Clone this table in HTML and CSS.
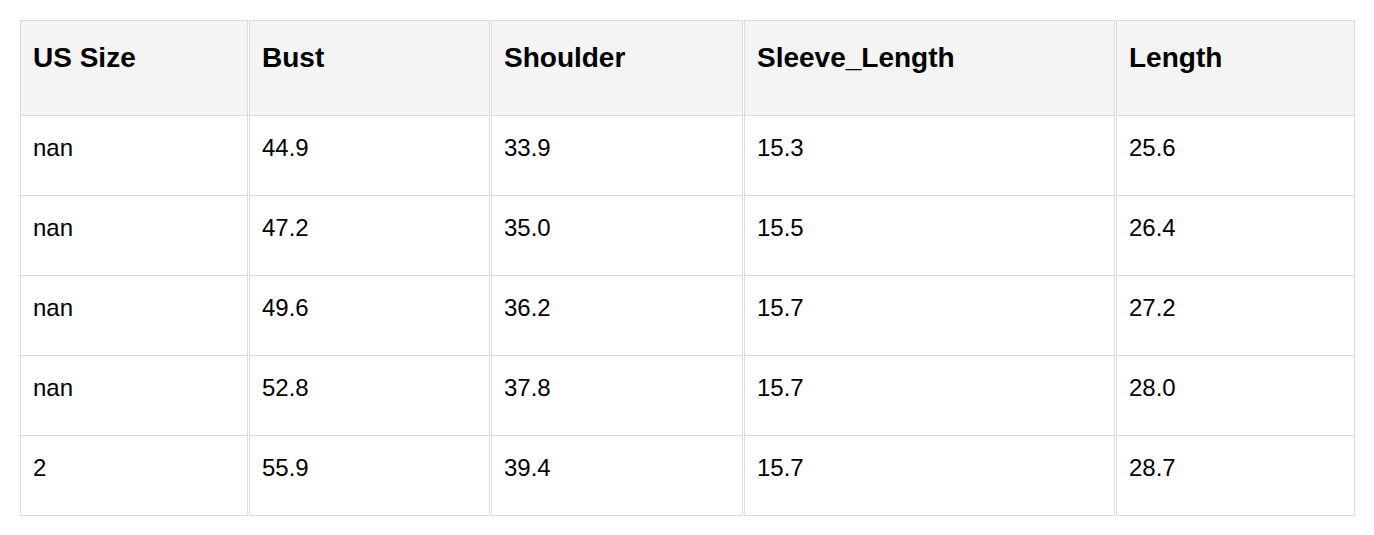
FILE: index.html
```html
<!DOCTYPE html>
<html>
<head>
<meta charset="utf-8">
<link rel="stylesheet" href="styles.css">
</head>
<body>
<div class="wrap">
<table class="size-table">
<colgroup>
<col class="c1"><col class="c2"><col class="c3"><col class="c4"><col class="c5">
</colgroup>
<thead>
<tr><th>US Size</th><th>Bust</th><th>Shoulder</th><th>Sleeve_Length</th><th>Length</th></tr>
</thead>
<tbody>
<tr><td>nan</td><td>44.9</td><td>33.9</td><td>15.3</td><td>25.6</td></tr>
<tr><td>nan</td><td>47.2</td><td>35.0</td><td>15.5</td><td>26.4</td></tr>
<tr><td>nan</td><td>49.6</td><td>36.2</td><td>15.7</td><td>27.2</td></tr>
<tr><td>nan</td><td>52.8</td><td>37.8</td><td>15.7</td><td>28.0</td></tr>
<tr><td>2</td><td>55.9</td><td>39.4</td><td>15.7</td><td>28.7</td></tr>
</tbody>
</table>
</div>
</body>
</html>
```

FILE: styles.css
```css
html, body {
  margin: 0;
  padding: 0;
  background: #fff;
}
.wrap {
  padding: 20px 19px;
}
.size-table {
  border-collapse: separate;
  border-spacing: 1px 0;
  table-layout: fixed;
  width: 1337px;
  font-family: "Liberation Sans", Arial, sans-serif;
  color: #000;
}
.c1 { width: 228px; }
.c2 { width: 241px; }
.c3 { width: 252px; }
.c4 { width: 371px; }
.c5 { width: 239px; }
.size-table th,
.size-table td {
  box-sizing: border-box;
  border-left: 1px solid #dcdcdc;
  border-right: 1px solid #dcdcdc;
  border-bottom: 1px solid #dcdcdc;
  text-align: left;
  vertical-align: top;
}
.size-table th {
  border-top: 1px solid #dcdcdc;
  background: #f4f4f4;
  font-weight: bold;
  font-size: 28px;
  line-height: 32px;
  padding: 21px 12px 41px;
}
.size-table td {
  font-size: 24px;
  line-height: 28px;
  padding: 18px 12px 33px;
}
```
